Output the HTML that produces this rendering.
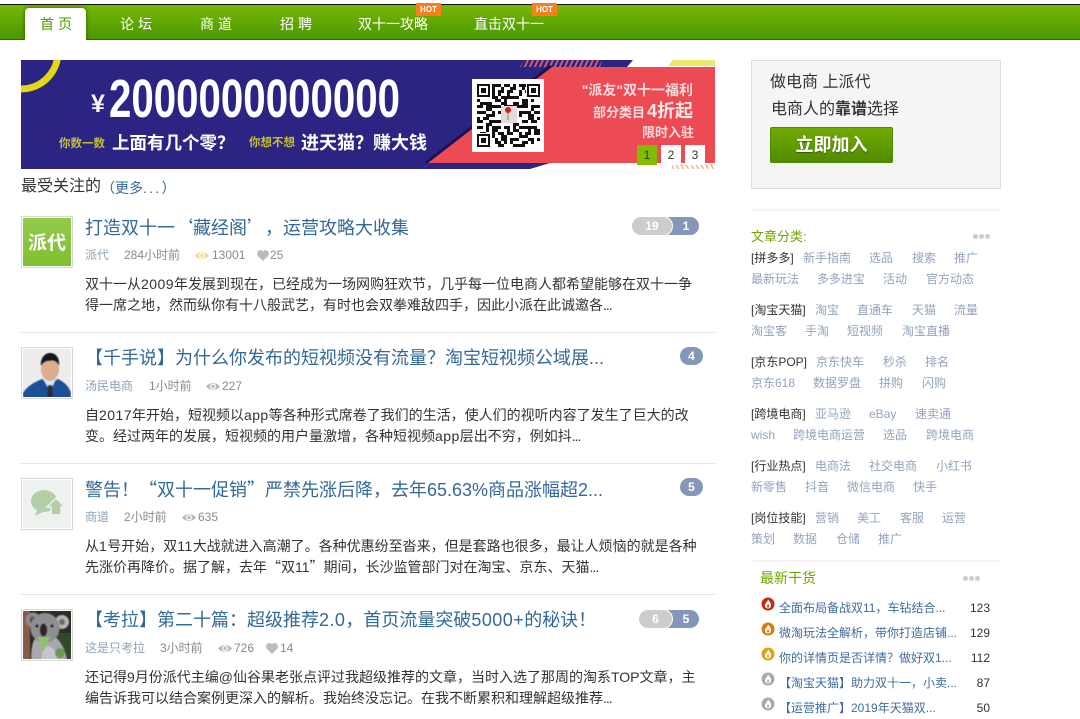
<!DOCTYPE html>
<html lang="zh-CN"><head><meta charset="utf-8"><title>派代</title>
<style>
html,body{margin:0;padding:0;background:#fff;width:1080px;height:719px;overflow:hidden}
body{position:relative;font-family:"Liberation Sans","Noto Sans CJK SC",sans-serif;color:#333;text-spacing-trim:space-all}
.a{position:absolute}
.t{position:absolute;white-space:nowrap}
.q{font-family:"Noto Sans CJK SC",sans-serif}
.d{letter-spacing:.45px}
.e{letter-spacing:-1px}
.nav{top:14px;line-height:20px;font-size:14px;color:#fff}
.hot{position:absolute;top:3px;width:25px;height:13px;background:#fb7d1c;color:#fff;font-size:8px;font-weight:bold;line-height:13px;text-align:center;border-radius:1px}
.title{font-size:18px;line-height:26px;color:#33689b}
.m{font-size:12px;line-height:16px;color:#8a8a8a}
.au{color:#8fa3b8}
.ex{font-size:14px;line-height:21px;color:#333}
.av{position:absolute;left:21px;width:48px;height:48px;padding:1px;border:1px solid #d8d8d8;overflow:hidden;background:#fff}
.av svg{display:block}
.hr{position:absolute;left:21px;width:694px;height:1px;background:#e5e5e5}
.b{position:absolute;height:18px;line-height:18px;font-size:12px;font-weight:bold;color:#fff;text-align:center;border-radius:9px;box-sizing:border-box}
.g{background:#ccc;box-shadow:0 0 0 1px #fff}.bl{background:#8497b8}
.pg{position:absolute;top:145px;width:20px;height:20px;background:#fff;font-size:12px;line-height:20px;text-align:center;color:#333}
.tag{font-size:12px;line-height:18px;color:#93a3bd}
.tb{color:#333}
.li{font-size:12px;line-height:18px;color:#3f6ba0}
.n{position:absolute;left:950px;width:40px;text-align:right;font-size:12px;line-height:18px;color:#333}
.dots{position:absolute;width:5px;height:5px;border-radius:50%;background:#ccc}
</style></head><body>

<div class="a" style="left:0;top:4px;width:1080px;height:1px;background:#111"></div>
<div class="a" style="left:0;top:5px;width:1080px;height:34px;background:linear-gradient(#76b706,#4b9800)"></div>
<div class="a" style="left:0;top:39px;width:1080px;height:1px;background:#2f7000"></div>
<div class="a" style="left:25px;top:8px;width:61px;height:32px;background:#fff;border-radius:4px 4px 0 0;box-shadow:0 0 5px rgba(0,50,0,.6)"></div>
<div class="a" style="left:20px;top:40px;width:70px;height:8px;background:#fff"></div>
<span class="t nav" style="left:40px;color:#4d9a00;letter-spacing:4px">首页</span>
<span class="t nav" style="left:120px;letter-spacing:4px">论坛</span>
<span class="t nav" style="left:200px;letter-spacing:4px">商道</span>
<span class="t nav" style="left:280px;letter-spacing:4px">招聘</span>
<span class="t nav" style="left:358px">双十一攻略</span>
<span class="t nav" style="left:474px">直击双十一</span>
<span class="hot" style="left:416px">HOT</span>
<span class="hot" style="left:532px">HOT</span>

<svg class="a" style="left:21px;top:60px" width="694" height="109" viewBox="21 60 694 109">
<defs>
<pattern id="h" width="5" height="7" patternUnits="userSpaceOnUse" patternTransform="skewX(-25)"><rect width="2" height="7" fill="#d8606f"/></pattern>
<pattern id="h2" width="5" height="6" patternUnits="userSpaceOnUse" patternTransform="skewX(30)"><rect width="2" height="6" fill="#f3b9a0"/></pattern>
<pattern id="q1" x="477" y="84" width="27" height="21" patternUnits="userSpaceOnUse"><path d="M0 0h6v3H0zM9 0h3v6H9zM15 0h9v3h-9zM3 6h6v3H3zM15 6h3v6h-3zM21 6h6v3h-6zM0 12h3v6H0zM6 12h6v3H6zM18 15h6v3h-6zM9 18h6v3H9zM24 12h3v3h-3z" fill="#111"/></pattern>
<pattern id="q2" x="477" y="84" width="21" height="33" patternUnits="userSpaceOnUse"><path d="M3 3h3v3H3zM12 3h6v3h-6zM0 9h3v3H0zM9 9h3v6H9zM15 12h6v3h-6zM3 18h6v3H3zM12 21h3v6h-3zM18 21h3v3h-3zM0 27h6v3H0zM9 30h6v3H9z" fill="#111"/></pattern>
</defs>
<rect x="21" y="60" width="694" height="109" fill="#2b2482"/>
<circle cx="21" cy="52" r="37" fill="none" stroke="#e2d916" stroke-width="7"/>
<polygon points="633,60 715,60 715,169 530,169 422,169 430,163 553,67 627,67" fill="#fff"/>
<polygon points="673,60 715,60 715,66 668,66" fill="#ece768"/>
<polygon points="422,169 430,163 550,163 530,169" fill="#2b2482"/>
<polygon points="524,60 602,60 600,67 520,67" fill="url(#h)"/>
<path d="M551 66 426 163" stroke="#17124f" stroke-width="3"/>
<polygon points="552,67 715,67 715,163 428,163" fill="#ec4b53"/>
<polygon points="672,164 715,164 715,169 672,169" fill="url(#h2)"/>
<text x="91" y="112" font-family="Liberation Sans" font-weight="bold" font-size="25" fill="#f4f4f8">¥</text>
<text x="109" y="117" font-family="Liberation Sans" font-weight="bold" font-size="54" fill="#fff" textLength="291" lengthAdjust="spacingAndGlyphs">2000000000000</text>
<g font-family="Liberation Sans,Noto Sans CJK SC,sans-serif" font-weight="bold">
<text x="59" y="147" font-size="11.5" fill="#c4bd35">你数一数</text>
<text x="112" y="149" font-size="17.500" fill="#fff">上面有几个零？</text>
<text x="249" y="146" font-size="11.5" fill="#c4bd35">你想不想</text>
<text x="301" y="149" font-size="18" fill="#fff">进天猫？赚大钱</text>
<text x="693" y="95" font-size="14" fill="#fbdcdc" text-anchor="end">"派友"双十一福利</text>
<text x="693" y="117" font-size="13" fill="#fbdcdc" text-anchor="end">部分类目<tspan font-size="18" fill="#fde8e8" dx="2">4折起</tspan></text>
<text x="694" y="137" font-size="13" fill="#fbdcdc" text-anchor="end">限时入驻</text>
</g>
<rect x="472" y="79" width="72" height="73" fill="#fff"/>
<rect x="477" y="84" width="63" height="63" fill="url(#q1)"/>
<rect x="477" y="84" width="63" height="63" fill="url(#q2)"/>
<g fill="#fff"><rect x="476" y="83" width="16" height="16"/><rect x="526" y="83" width="16" height="16"/><rect x="476" y="133" width="16" height="16"/></g>
<g fill="#fff" stroke="#111" stroke-width="2">
<rect x="478" y="85" width="11" height="11"/><rect x="528" y="85" width="11" height="11"/><rect x="478" y="135" width="11" height="11"/>
</g>
<g fill="#111"><rect x="481" y="88" width="5" height="5"/><rect x="531" y="88" width="5" height="5"/><rect x="481" y="138" width="5" height="5"/></g>
<rect x="501" y="106" width="16" height="17" fill="#e8d8d8"/><circle cx="508" cy="110" r="3" fill="#c22"/><path d="M508 113v7" stroke="#5a5" stroke-width="1"/>
</svg>
<div class="pg" style="left:637px;background:#82bc00">1</div>
<div class="pg" style="left:661px">2</div>
<div class="pg" style="left:685px">3</div>

<span class="t" style="left:21px;top:177px;font-size:16px;line-height:20px;color:#333">最受关注的</span>
<span class="t" style="left:101px;top:178px;font-size:14px;line-height:20px;color:#33689b">（更多<span style="letter-spacing:2.300px">...</span>）</span>

<!-- item 1 -->
<div class="av" style="top:216px"><svg width="48" height="48"><defs><linearGradient id="gr" x1="0" y1="0" x2="0" y2="1"><stop offset="0" stop-color="#92cb4a"/><stop offset="1" stop-color="#80bf30"/></linearGradient></defs><rect width="48" height="48" fill="url(#gr)"/><text x="24" y="31" text-anchor="middle" font-family="Noto Sans CJK SC,sans-serif" font-weight="bold" font-size="19" fill="#fff">派代</text></svg></div>
<span class="t title" style="left:85px;top:214px">打造双十一<span class="q">‘</span>藏经阁<span class="q">’</span>，运营攻略大收集</span>
<span class="t m au" style="left:85px;top:247px">派代</span>
<span class="t m" style="left:124px;top:247px">284小时前</span>
<svg class="a" style="left:195px;top:250px" width="14" height="11"><path d="M0 5.500C3 1 11 1 14 5.500 11 10 3 10 0 5.500Z" fill="#fbd39c"/><circle cx="7" cy="5.500" r="3" fill="#fff"/><circle cx="7" cy="5.500" r="1.800" fill="#fbd39c"/></svg>
<span class="t m" style="left:212px;top:247px">13001</span>
<svg class="a" style="left:257px;top:250px" width="12" height="11"><path d="M6 11 1 6C-1 3 1 0 3.500 0 5 0 5.500 1 6 2 6.500 1 7 0 8.500 0 11 0 13 3 11 6Z" fill="#bbb"/></svg>
<span class="t m" style="left:270px;top:247px">25</span>
<span class="t ex" style="left:85px;top:274px">双十一从<span class="d">2009</span>年发展到现在，已经成为一场网购狂欢节，几乎每一位电商人都希望能够在双十一争</span>
<span class="t ex" style="left:85px;top:295px">得一席之地，然而纵你有十八般武艺，有时也会双拳难敌四手，因此小派在此诚邀各<span class="e">...</span></span>
<div class="b bl" style="left:660px;top:217px;width:39px;padding-left:13px">1</div>
<div class="b g" style="left:632px;top:217px;width:40px">19</div>
<div class="hr" style="top:332px"></div>

<!-- item 2 -->
<div class="av" style="top:347px"><svg width="48" height="48"><defs><filter id="bl"><feGaussianBlur stdDeviation=".6"/></filter></defs><rect width="48" height="48" fill="#eeecec"/><g filter="url(#bl)"><path d="M0 50V44C4 37 12 33 19 30L27 34 35 30C41 33 46 37 48 44V50Z" fill="#1d4f96"/><path d="M19 28 34 28 27 42z" fill="#dbe6f2"/><path d="M25 36h4l1 12h-6z" fill="#2a2a38"/><ellipse cx="27" cy="20" rx="9" ry="12" fill="#dcae8e"/><path d="M18 17C17 9 22 4 27 4 33 4 37 9 36 17 34 12 30 11 26 12 22 12 20 14 18 17Z" fill="#17151a"/></g></svg></div>
<span class="t title" style="left:85px;top:345px">【千手说】为什么你发布的短视频没有流量？淘宝短视频公域展...</span>
<span class="t m au" style="left:85px;top:378px">汤民电商</span>
<span class="t m" style="left:149px;top:378px">1小时前</span>
<svg class="a" style="left:206px;top:381px" width="14" height="11"><path d="M0 5.500C3 1 11 1 14 5.500 11 10 3 10 0 5.500Z" fill="#bbb"/><circle cx="7" cy="5.500" r="3" fill="#fff"/><circle cx="7" cy="5.500" r="1.800" fill="#bbb"/></svg>
<span class="t m" style="left:222px;top:378px">227</span>
<span class="t ex" style="left:85px;top:405px">自<span class="d">2017</span>年开始，短视频以<span class="d">app</span>等各种形式席卷了我们的生活，使人们的视听内容了发生了巨大的改</span>
<span class="t ex" style="left:85px;top:426px">变。经过两年的发展，短视频的用户量激增，各种短视频<span class="d">app</span>层出不穷，例如抖<span class="e">...</span></span>
<div class="b bl" style="left:680px;top:347px;width:23px">4</div>
<div class="hr" style="top:463px"></div>

<!-- item 3 -->
<div class="av" style="top:478px"><svg width="48" height="48"><rect width="48" height="48" fill="#eef3ee"/><ellipse cx="21" cy="21" rx="13" ry="11" fill="#b3cfa8"/><path d="M15 28l-3 8 10-5z" fill="#b3cfa8"/><path d="M24 27 33 18 42 27H38V35H28V27Z" fill="#b3cfa8" stroke="#eef3ee" stroke-width="1.500"/></svg></div>
<span class="t title" style="left:85px;top:476px">警告！<span class="q">“</span>双十一促销<span class="q">”</span>严禁先涨后降，去年65.63%商品涨幅超2...</span>
<span class="t m au" style="left:85px;top:509px">商道</span>
<span class="t m" style="left:124px;top:509px">2小时前</span>
<svg class="a" style="left:182px;top:512px" width="14" height="11"><path d="M0 5.500C3 1 11 1 14 5.500 11 10 3 10 0 5.500Z" fill="#bbb"/><circle cx="7" cy="5.500" r="3" fill="#fff"/><circle cx="7" cy="5.500" r="1.800" fill="#bbb"/></svg>
<span class="t m" style="left:198px;top:509px">635</span>
<span class="t ex" style="left:85px;top:536px">从<span class="d">1</span>号开始，双<span class="d">11</span>大战就进入高潮了。各种优惠纷至沓来，但是套路也很多，最让人烦恼的就是各种</span>
<span class="t ex" style="left:85px;top:557px">先涨价再降价。据了解，去年<span class="q">“</span>双11<span class="q">”</span>期间，长沙监管部门对在淘宝、京东、天猫<span class="e">...</span></span>
<div class="b bl" style="left:680px;top:478px;width:23px">5</div>
<div class="hr" style="top:594px"></div>

<!-- item 4 -->
<div class="av" style="top:609px"><svg width="48" height="48"><rect width="48" height="48" fill="#2c2c22"/><rect x="30" y="22" width="18" height="26" fill="#2f4a2a"/><g filter="url(#bl)"><rect x="-2" y="-2" width="9" height="52" fill="#8a5a48"/><circle cx="10" cy="9" r="7.500" fill="#8d8b8c"/><circle cx="10" cy="9" r="3.500" fill="#5a5658"/><circle cx="39" cy="11" r="7" fill="#b5b3b4"/><circle cx="39" cy="11" r="3" fill="#6d696a"/><path d="M8 50C8 36 10 28 14 26H32C38 30 43 40 44 50Z" fill="#a8a8ae"/><path d="M20 38C26 32 32 36 35 50H18Z" fill="#c6c6ca"/><ellipse cx="22" cy="17" rx="14.500" ry="15" fill="#8e8e93"/><circle cx="14" cy="15" r="1.600" fill="#2a2222"/><circle cx="29" cy="15" r="1.600" fill="#2a2222"/><ellipse cx="20.500" cy="19" rx="3.700" ry="6.500" fill="#2e282c"/><path d="M14 26H27L21 40Z" fill="#8fc06a"/><ellipse cx="37" cy="42" rx="5" ry="5" fill="#6a9a55"/></g></svg></div>
<span class="t title" style="left:85px;top:607px">【考拉】第二十篇：超级推荐<span class="d">2.0</span>，首页流量突破<span class="d">5000+</span>的秘诀！</span>
<span class="t m au" style="left:85px;top:640px">这是只考拉</span>
<span class="t m" style="left:160px;top:640px">3小时前</span>
<svg class="a" style="left:218px;top:643px" width="14" height="11"><path d="M0 5.500C3 1 11 1 14 5.500 11 10 3 10 0 5.500Z" fill="#bbb"/><circle cx="7" cy="5.500" r="3" fill="#fff"/><circle cx="7" cy="5.500" r="1.800" fill="#bbb"/></svg>
<span class="t m" style="left:234px;top:640px">726</span>
<svg class="a" style="left:266px;top:643px" width="12" height="11"><path d="M6 11 1 6C-1 3 1 0 3.500 0 5 0 5.500 1 6 2 6.500 1 7 0 8.500 0 11 0 13 3 11 6Z" fill="#bbb"/></svg>
<span class="t m" style="left:280px;top:640px">14</span>
<span class="t ex" style="left:85px;top:667px">还记得9月份派代主编@仙谷果老张点评过我超级推荐的文章，当时入选了那周的淘系TOP文章，主</span>
<span class="t ex" style="left:85px;top:688px">编告诉我可以结合案例更深入的解析。我始终没忘记。在我不断累积和理解超级推荐<span class="e">...</span></span>
<div class="b bl" style="left:660px;top:610px;width:39px;padding-left:13px">5</div>
<div class="b g" style="left:639px;top:610px;width:33px">6</div>

<!-- sidebar -->
<div class="a" style="left:751px;top:60px;width:248px;height:127px;background:#f5f5f5;border:1px solid #ddd"></div>
<span class="t" style="left:770px;top:73px;font-size:16px;line-height:20px;color:#333">做电商 上派代</span>
<span class="t" style="left:771px;top:100px;font-size:16px;line-height:20px;color:#333">电商人的<b>靠谱</b>选择</span>
<div class="a" style="left:770px;top:127px;width:121px;height:34px;border:1px solid #4c8a00;border-radius:2px;background:linear-gradient(#72aa00,#4f8c00);color:#fff;font-size:18px;font-weight:bold;line-height:34px;text-align:center;text-shadow:0 1px 1px rgba(0,0,0,.4)">立即加入</div>
<div class="a" style="left:751px;top:209px;width:250px;height:2px;background:#f4f4f4"></div>
<span class="t" style="left:751px;top:228px;font-size:13px;line-height:18px;color:#6fa500">文章分类:</span>
<i class="dots" style="left:973px;top:234px"></i><i class="dots" style="left:979px;top:234px"></i><i class="dots" style="left:985px;top:234px"></i>

<span class="t tag tb" style="left:751px;top:249px">[拼多多]</span>
<span class="t tag" style="left:803px;top:249px">新手指南</span><span class="t tag" style="left:869px;top:249px">选品</span><span class="t tag" style="left:912px;top:249px">搜索</span><span class="t tag" style="left:954px;top:249px">推广</span>
<span class="t tag" style="left:751px;top:270px">最新玩法</span><span class="t tag" style="left:817px;top:270px">多多进宝</span><span class="t tag" style="left:883px;top:270px">活动</span><span class="t tag" style="left:926px;top:270px">官方动态</span>

<span class="t tag tb" style="left:751px;top:301px">[淘宝天猫]</span>
<span class="t tag" style="left:815px;top:301px">淘宝</span><span class="t tag" style="left:857px;top:301px">直通车</span><span class="t tag" style="left:912px;top:301px">天猫</span><span class="t tag" style="left:954px;top:301px">流量</span>
<span class="t tag" style="left:751px;top:322px">淘宝客</span><span class="t tag" style="left:805px;top:322px">手淘</span><span class="t tag" style="left:847px;top:322px">短视频</span><span class="t tag" style="left:902px;top:322px">淘宝直播</span>

<span class="t tag tb" style="left:751px;top:353px">[京东POP]</span>
<span class="t tag" style="left:816px;top:353px">京东快车</span><span class="t tag" style="left:883px;top:353px">秒杀</span><span class="t tag" style="left:925px;top:353px">排名</span>
<span class="t tag" style="left:751px;top:374px">京东618</span><span class="t tag" style="left:813px;top:374px">数据罗盘</span><span class="t tag" style="left:879px;top:374px">拼购</span><span class="t tag" style="left:922px;top:374px">闪购</span>

<span class="t tag tb" style="left:751px;top:405px">[跨境电商]</span>
<span class="t tag" style="left:815px;top:405px">亚马逊</span><span class="t tag" style="left:869px;top:405px">eBay</span><span class="t tag" style="left:915px;top:405px">速卖通</span>
<span class="t tag" style="left:751px;top:426px">wish</span><span class="t tag" style="left:793px;top:426px">跨境电商运营</span><span class="t tag" style="left:883px;top:426px">选品</span><span class="t tag" style="left:926px;top:426px">跨境电商</span>

<span class="t tag tb" style="left:751px;top:457px">[行业热点]</span>
<span class="t tag" style="left:815px;top:457px">电商法</span><span class="t tag" style="left:869px;top:457px">社交电商</span><span class="t tag" style="left:936px;top:457px">小红书</span>
<span class="t tag" style="left:751px;top:478px">新零售</span><span class="t tag" style="left:805px;top:478px">抖音</span><span class="t tag" style="left:847px;top:478px">微信电商</span><span class="t tag" style="left:913px;top:478px">快手</span>

<span class="t tag tb" style="left:751px;top:509px">[岗位技能]</span>
<span class="t tag" style="left:815px;top:509px">营销</span><span class="t tag" style="left:857px;top:509px">美工</span><span class="t tag" style="left:900px;top:509px">客服</span><span class="t tag" style="left:942px;top:509px">运营</span>
<span class="t tag" style="left:751px;top:530px">策划</span><span class="t tag" style="left:793px;top:530px">数据</span><span class="t tag" style="left:836px;top:530px">仓储</span><span class="t tag" style="left:878px;top:530px">推广</span>

<div class="a" style="left:751px;top:560px;width:250px;height:2px;background:#f4f4f4"></div>
<span class="t" style="left:760px;top:568px;font-size:14px;line-height:20px;color:#6fa500">最新干货</span>
<i class="dots" style="left:963px;top:576px"></i><i class="dots" style="left:969px;top:576px"></i><i class="dots" style="left:975px;top:576px"></i>

<svg class="a" style="left:761px;top:597px" width="14" height="14"><circle cx="7" cy="7" r="6.500" fill="#c22a0c"/><path d="M7 2.500C9 5 10.500 6.500 10 9 9.500 11 8 11.500 7 11.500 5 11.500 3.800 10 4 8 4.500 6 6.500 5 7 2.500Z" fill="#fff"/><path d="M7 7C8 8.500 8.300 9 8 10 7.500 10.800 6.500 10.800 6 10 5.700 9 6.500 8.500 7 7Z" fill="#c22a0c"/></svg>
<svg class="a" style="left:761px;top:622px" width="14" height="14"><circle cx="7" cy="7" r="6.500" fill="#dc7a0e"/><path d="M7 2.500C9 5 10.500 6.500 10 9 9.500 11 8 11.500 7 11.500 5 11.500 3.800 10 4 8 4.500 6 6.500 5 7 2.500Z" fill="#fff"/><path d="M7 7C8 8.500 8.300 9 8 10 7.500 10.800 6.500 10.800 6 10 5.700 9 6.500 8.500 7 7Z" fill="#dc7a0e"/></svg>
<svg class="a" style="left:761px;top:647px" width="14" height="14"><circle cx="7" cy="7" r="6.500" fill="#e0a10c"/><path d="M7 2.500C9 5 10.500 6.500 10 9 9.500 11 8 11.500 7 11.500 5 11.500 3.800 10 4 8 4.500 6 6.500 5 7 2.500Z" fill="#fff"/><path d="M7 7C8 8.500 8.300 9 8 10 7.500 10.800 6.500 10.800 6 10 5.700 9 6.500 8.500 7 7Z" fill="#e0a10c"/></svg>
<svg class="a" style="left:761px;top:672px" width="14" height="14"><circle cx="7" cy="7" r="6.500" fill="#aaa"/><path d="M7 2.500C9 5 10.500 6.500 10 9 9.500 11 8 11.500 7 11.500 5 11.500 3.800 10 4 8 4.500 6 6.500 5 7 2.500Z" fill="#fff"/><path d="M7 7C8 8.500 8.300 9 8 10 7.500 10.800 6.500 10.800 6 10 5.700 9 6.500 8.500 7 7Z" fill="#aaa"/></svg>
<svg class="a" style="left:761px;top:697px" width="14" height="14"><circle cx="7" cy="7" r="6.500" fill="#aaa"/><path d="M7 2.500C9 5 10.500 6.500 10 9 9.500 11 8 11.500 7 11.500 5 11.500 3.800 10 4 8 4.500 6 6.500 5 7 2.500Z" fill="#fff"/><path d="M7 7C8 8.500 8.300 9 8 10 7.500 10.800 6.500 10.800 6 10 5.700 9 6.500 8.500 7 7Z" fill="#aaa"/></svg>

<span class="t li" style="left:779px;top:599px">全面布局备战双11，车钻结合...</span><span class="n" style="top:599px">123</span>
<span class="t li" style="left:779px;top:624px">微淘玩法全解析，带你打造店铺...</span><span class="n" style="top:624px">129</span>
<span class="t li" style="left:779px;top:649px">你的详情页是否详情？做好双1...</span><span class="n" style="top:649px">112</span>
<span class="t li" style="left:779px;top:674px">【淘宝天猫】助力双十一，小卖...</span><span class="n" style="top:674px">87</span>
<span class="t li" style="left:779px;top:699px">【运营推广】2019年天猫双...</span><span class="n" style="top:699px">50</span>

</body></html>
